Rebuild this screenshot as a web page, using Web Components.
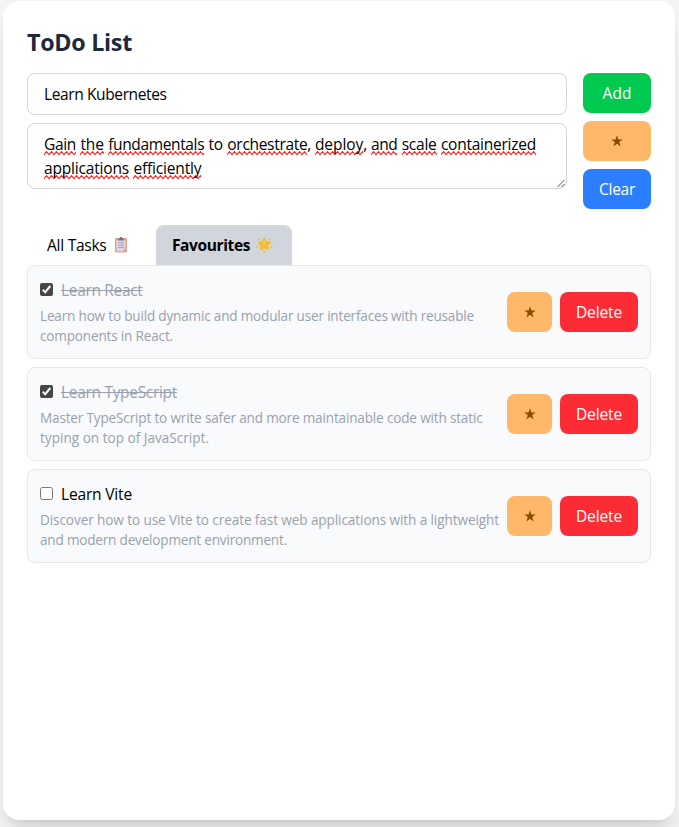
<!DOCTYPE html>
<html lang="en">
<head>
<meta charset="utf-8">
<title>ToDo List</title>
<style>
html,body{margin:0;height:100%;overflow:hidden}
body{background:#f3f4f6;font-family:"Open Sans","Noto Sans",sans-serif;font-size:16px;line-height:24px;color:#000}
</style>
</head>
<body>
<todo-app></todo-app>
<script>
const define = (name, css, html, setup) => {
  const t = document.createElement('template');
  t.innerHTML = `<style>*{box-sizing:border-box}${css}</style>${html}`;
  customElements.define(name, class extends HTMLElement {
    constructor() {
      super();
      this.attachShadow({ mode: 'open' }).append(t.content.cloneNode(true));
    }
    connectedCallback() { if (setup) setup(this, this.shadowRoot); }
  });
};

/* A single line of text whose tracking is set so that it fills width w. */
define('fit-text',
  `:host{display:inline-block;white-space:pre;flex:none;font-size:.97em;vertical-align:top;transform:translateY(var(--drop,0))}
   :host([del]){text-decoration:line-through}
   span{display:inline-block;text-decoration:inherit}
   :host([wavy]) span{background:url("data:image/svg+xml,%3Csvg xmlns='http://www.w3.org/2000/svg' width='5' height='5'%3E%3Cpath d='M-2.5 .6L0 3.7L2.5 .6L5 3.7L7.5 .6' fill='none' stroke='%23ff2020' stroke-width='1.1'/%3E%3C/svg%3E") 0 19px repeat-x}`,
  `<span><slot></slot></span>`,
  (el, root) => {
    const span = root.querySelector('span');
    const w = parseFloat(el.getAttribute('w'));
    if (!w) return;
    const n = el.textContent.length;
    span.style.letterSpacing = (w - span.getBoundingClientRect().width) / n + 'px';
    el.style.width = w + 'px';
  });

define('star-icon', `:host{display:block;width:12px;height:12px}svg{display:block}`,
  `<svg width="12" height="12" viewBox="0 0 12 12"><path d="M6 .2L7.4 4.5H11.8L8.2 7.1L9.6 11.4L6 8.8L2.4 11.4L3.8 7.1L.2 4.5H4.6Z" fill="#894b00"/></svg>`);

define('ui-button',
  `:host{display:block;flex:none}
   button{display:flex;align-items:center;justify-content:center;width:100%;height:40px;padding:0 16px;border:0;border-radius:8px;background:var(--c);color:#fff;font:inherit}
   :host([kind=add]){--c:#00c950}:host([kind=star]){--c:#ffb86a}:host([kind=clear]){--c:#2b7fff}:host([kind=delete]){--c:#fb2c36;width:78px}`,
  `<button><slot></slot></button>`);

define('text-field',
  `:host{display:block;position:relative;border:1px solid #d1d5dc;border-radius:8px;background:#fff;padding:8px 16px;height:42px}
   :host([multi]){height:66px}
   svg{display:none;position:absolute;right:0;bottom:0}
   :host([multi]) svg{display:block}`,
  `<slot></slot><svg width="9" height="9" viewBox="0 0 9 9"><path d="M.5 8L7.5 1M4.5 8L7.5 5" stroke="#555" fill="none"/></svg>`);

define('text-row', `:host{display:flex;height:24px}`, `<slot></slot>`);

define('check-box',
  `:host{display:block;flex:none;width:13px;height:13px}svg{display:none}
   div{width:13px;height:13px;border:1px solid #767676;border-radius:2.5px;background:#fff}
   :host([checked]) div{display:none}:host([checked]) svg{display:block}`,
  `<div></div><svg width="13" height="13" viewBox="0 0 13 13"><rect width="13" height="13" rx="2" fill="#464646"/><path d="M2.8 6.8L5.2 9.2L10.3 3" fill="none" stroke="#fff" stroke-width="2"/></svg>`);

define('clipboard-icon', `:host{display:block;width:16px;height:18px}svg{display:block}`,
  `<svg width="16" height="18" viewBox="0 0 16 18"><rect x="2" y="2" width="12" height="14.5" rx="1" fill="#e0a080"/><path d="M3.4 3.5H12.6V15.2H3.4Z" fill="#dfd6e8"/><path d="M9.6 15.2L12.6 12.2V15.2Z" fill="#b4a6c8"/><path d="M5 4.4V2.6H6.6Q6.8 .7 8 .7T9.4 2.6H11V4.4Z" fill="#77757c"/><path d="M5 7H11M5 9.3H11M5 11.6H11" stroke="#a898bd" stroke-width="1"/></svg>`);

define('glow-icon', `:host{display:block;width:17px;height:18px}svg{display:block}`,
  `<svg width="17" height="18" viewBox="0 0 17 18"><g fill="#f0bd30"><path d="M8.4 2L10.3 5.8L14.4 6.4L11.5 9.3L12.2 13.4L8.4 11.5L4.6 13.4L5.3 9.3L2.4 6.4L6.5 5.8Z" stroke="#f0bd30" stroke-width="1.4" stroke-linejoin="round"/><circle cx="3.4" cy="3.2" r=".9"/><circle cx="13.5" cy="3.2" r=".9"/><circle cx="1.4" cy="10.8" r="1"/><circle cx="15.4" cy="10.8" r="1"/><circle cx="8.4" cy="15.4" r="1.2"/></g><path d="M8.4 3L9.8 6.5L8.4 10L6.8 6.5Z" fill="#f8ca42"/></svg>`);

define('tab-item',
  `:host{display:flex;align-items:center;height:40px;padding:0 19px 0 16px;border-radius:8px 8px 0 0;gap:6px}
   :host([active]){background:#d1d5dc;font-weight:700}`,
  `<slot></slot>`);

define('todo-item',
  `:host{display:flex;align-items:center;height:94px;padding:12px;border:1px solid #e5e7eb;border-radius:8px;background:#f9fafb}
   .main{flex:1;min-width:0}.head{display:flex;align-items:center;gap:8px;height:24px}
   check-box{position:relative;top:-1px}
   :host([done]) .head{color:#99a1af}
   .desc{margin-top:4px;font-size:14px;line-height:20px;color:#99a1af;display:grid}
   .actions{display:flex;gap:8px}
   [kind=star]{width:45px}`,
  `<div class="main"><div class="head"><check-box></check-box><slot name="title"></slot></div><div class="desc"><slot></slot></div></div>
   <div class="actions"><ui-button kind="star"><star-icon></star-icon></ui-button><ui-button kind="delete"><fit-text w="46">Delete</fit-text></ui-button></div>`,
  (el, root) => root.querySelector('check-box').toggleAttribute('checked', el.hasAttribute('done')));

define('todo-app',
  `:host{display:block;margin:0 4px 0 3px;padding-top:1px}
   main{height:819px;padding:24px;border-radius:16px;background:#fff;box-shadow:0 20px 25px -5px rgba(0,0,0,.1),0 8px 10px -6px rgba(0,0,0,.1)}
   h1{--drop:1px;margin:0 0 16px;font-size:24px;line-height:32px;font-weight:700;color:#1e2939;height:32px}
   .form{display:flex;gap:16px}
   .fields{flex:1;display:flex;flex-direction:column;gap:8px}
   .buttons{width:68px;display:flex;flex-direction:column;gap:8px}
   .tabs{display:flex;margin-top:16px}
   .tabs tab-item:first-child{padding-left:20px;width:129px}
   .list{display:flex;flex-direction:column;gap:8px}`,
  `<main>
    <h1><fit-text w="105">ToDo List</fit-text></h1>
    <div class="form">
      <div class="fields">
        <text-field><fit-text w="122.5">Learn Kubernetes</fit-text></text-field>
        <text-field multi>
          <text-row><fit-text wavy w="32">Gain</fit-text><fit-text w="4.4"> </fit-text><fit-text wavy w="23.6">the</fit-text><fit-text w="4.2"> </fit-text><fit-text wavy w="96">fundamentals</fit-text><fit-text w="4.4"> </fit-text><fit-text w="14.4">to</fit-text><fit-text w="4.4"> </fit-text><fit-text wavy w="80">orchestrate</fit-text><fit-text w="7.6">, </fit-text><fit-text wavy w="48.4">deploy</fit-text><fit-text w="7.6">, </fit-text><fit-text wavy w="26.4">and</fit-text><fit-text w="4.4"> </fit-text><fit-text wavy w="34.8">scale</fit-text><fit-text w="4.4"> </fit-text><fit-text wavy w="95">containerized</fit-text></text-row>
          <text-row><fit-text wavy w="85">applications</fit-text><fit-text w="4.4"> </fit-text><fit-text wavy w="68">efficiently</fit-text></text-row>
        </text-field>
      </div>
      <div class="buttons">
        <ui-button kind="add"><fit-text w="29">Add</fit-text></ui-button>
        <ui-button kind="star"><star-icon></star-icon></ui-button>
        <ui-button kind="clear"><fit-text w="36">Clear</fit-text></ui-button>
      </div>
    </div>
    <div class="tabs">
      <tab-item><fit-text w="59.5">All Tasks</fit-text><clipboard-icon></clipboard-icon></tab-item>
      <tab-item active><fit-text w="78">Favourites</fit-text><glow-icon></glow-icon></tab-item>
    </div>
    <div class="list">
      <todo-item done><fit-text slot="title" del w="81.5">Learn React</fit-text><fit-text w="434">Learn how to build dynamic and modular user interfaces with reusable</fit-text><fit-text w="133">components in React.</fit-text></todo-item>
      <todo-item done><fit-text slot="title" del w="116">Learn TypeScript</fit-text><fit-text w="442.5">Master TypeScript to write safer and more maintainable code with static</fit-text><fit-text w="169">typing on top of JavaScript.</fit-text></todo-item>
      <todo-item><fit-text slot="title" w="71">Learn Vite</fit-text><fit-text w="459">Discover how to use Vite to create fast web applications with a lightweight</fit-text><fit-text w="247">and modern development environment.</fit-text></todo-item>
    </div>
  </main>`);
</script>
</body>
</html>
